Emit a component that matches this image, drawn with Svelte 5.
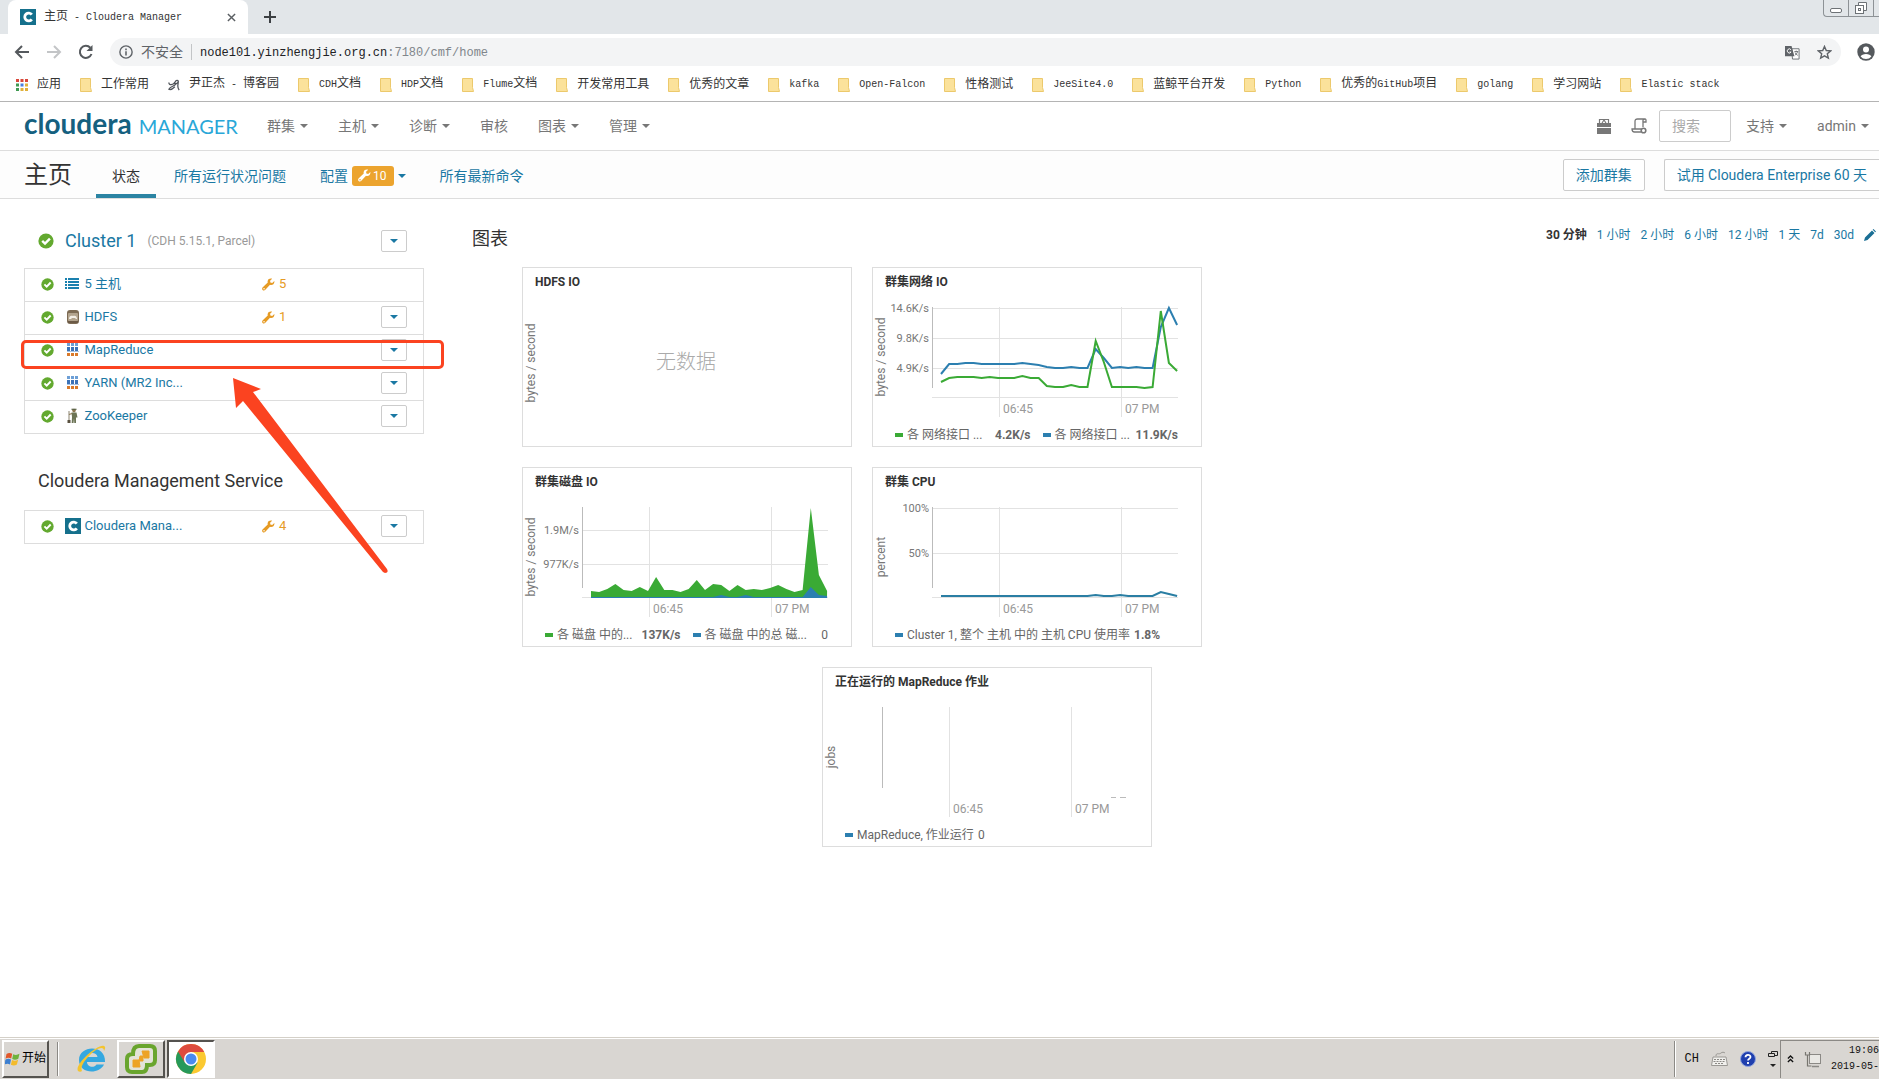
<script>
    let search = $state("");

    const bookmarks = [
        "工作常用", "尹正杰 - 博客园", "CDH文档", "HDP文档", "Flume文档", "开发常用工具",
        "优秀的文章", "kafka", "Open-Falcon", "性格测试", "JeeSite4.0", "蓝鲸平台开发",
        "Python", "优秀的GitHub项目", "golang", "学习网站", "Elastic stack"
    ];

    const menus = [
        { name: "群集", caret: true },
        { name: "主机", caret: true },
        { name: "诊断", caret: true },
        { name: "审核", caret: false },
        { name: "图表", caret: true },
        { name: "管理", caret: true }
    ];

    const ranges = ["1 小时", "2 小时", "6 小时", "12 小时", "1 天", "7d", "30d"];

    const services = [
        { name: "5 主机", icon: "hosts", issues: 5, menu: false },
        { name: "HDFS", icon: "hdfs", issues: 1, menu: true },
        { name: "MapReduce", icon: "mr", issues: 0, menu: true },
        { name: "YARN (MR2 Inc...", icon: "mr", issues: 0, menu: true },
        { name: "ZooKeeper", icon: "zoo", issues: 0, menu: true }
    ];
    const management = [{ name: "Cloudera Mana...", icon: "cm", issues: 4, menu: true }];

    const green = "#3aaa35";
    const blue = "#2c7fb0";

    // heights above the baseline, one per minute
    const charts = [
        { title: "HDFS IO", unit: "bytes / second", empty: true },
        {
            title: "群集网络 IO", unit: "bytes / second", baseline: true,
            ticks: [{ y: 41, label: "14.6K/s" }, { y: 71, label: "9.8K/s" }, { y: 101, label: "4.9K/s" }],
            lines: [
                { color: blue, data: [23, 33, 33, 34, 34, 33, 33, 33, 33, 33, 34, 33, 32, 30, 29, 29, 30, 29, 29, 48, 39, 29, 30, 29, 30, 29, 29, 70, 89, 72] },
                { color: green, data: [15, 19, 20, 20, 20, 19, 20, 19, 19, 19, 21, 19, 19, 11, 10, 10, 12, 10, 10, 56, 35, 10, 10, 10, 10, 9, 10, 86, 34, 26] }
            ],
            legend: [
                { color: green, name: "各 网络接口 ...", value: "4.2K/s" },
                { color: blue, name: "各 网络接口 ...", value: "11.9K/s" }
            ]
        },
        {
            title: "群集磁盘 IO", unit: "bytes / second", baseline: true, area: true,
            ticks: [{ y: 63, label: "1.9M/s" }, { y: 97, label: "977K/s" }],
            lines: [
                { color: green, data: [6, 5, 8, 13, 7, 6, 10, 6, 20, 7, 7, 5, 8, 17, 7, 13, 12, 6, 12, 7, 8, 7, 9, 12, 8, 5, 7, 89, 22, 6] },
                { color: blue, data: [0, 0, 0, 0, 0, 0, 0, 0, 0, 0, 0, 0, 0, 0, 0, 0, 2, 0, 0, 2, 0, 0, 0, 0, 0, 0, 0, 10, 2, 1] }
            ],
            legend: [
                { color: green, name: "各 磁盘 中的...", value: "137K/s" },
                { color: blue, name: "各 磁盘 中的总 磁...", value: "0" }
            ]
        },
        {
            title: "群集 CPU", unit: "percent", baseline: true,
            ticks: [{ y: 41, label: "100%" }, { y: 86, label: "50%" }],
            lines: [
                { color: "#2a7ea3", data: [1, 1, 1, 1, 1, 1, 1, 1, 1, 1, 1, 1, 1, 1, 1, 1, 1, 1, 1, 2, 1, 1, 2, 1, 1, 1, 1, 5, 3, 1] }
            ],
            legend: [{ color: blue, name: "Cluster 1, 整个 主机 中的 主机 CPU 使用率", value: "1.8%" }]
        },
        {
            title: "正在运行的 MapReduce 作业", unit: "jobs", offset: true, dashes: true,
            ticks: [], lines: [],
            legend: [{ color: blue, name: "MapReduce, 作业运行", value: "0" }]
        }
    ];

    function points(data) {
        return data.map((h, i) => `${(69 + i * 8.14).toFixed(1)},${130 - h}`).join(" ");
    }

    // splits a label into Chinese and Latin runs, the Latin ones are set smaller
    function runs(text) {
        return text.match(/[\u4e00-\u9fff]+|[^\u4e00-\u9fff]+/g);
    }
</script>

{#snippet mixed(text)}{#each runs(text) as run}<span class:latin={run.charCodeAt(0) < 256}>{run}</span>{/each}{/snippet}

{#snippet wrench()}
    <svg class="wrench" viewBox="0 0 14 14" width="13" height="13" aria-hidden="true">
        <path fill="currentColor" d="M13.3 3.3 11 5.3 9 4.900 8.700 3 10.900.8C9 .1 6.600 1 6.100 3.100c-.1.6-.1 1.200.1 1.700L.8 9.900c-.9.9-.9 2.200-.1 2.900.8.8 2.100.7 2.900-.2l5-5.300c2.300.9 5.200-.9 4.700-4zM2.200 12.400a.8.8 0 1 1 0-1.600.8.8 0 0 1 0 1.600z"/>
    </svg>
{/snippet}

{#snippet check(size)}
    <svg viewBox="0 0 16 16" width={size} height={size} role="img" aria-label="运行状况良好">
        <circle cx="8" cy="8" r="7.600" fill="#63a92f"/>
        <path d="M4.200 7.900 7 10.600 11.900 5.600" fill="none" stroke="#fff" stroke-width="2.400"/>
    </svg>
{/snippet}

{#snippet cloud(size)}
    <svg viewBox="0 0 16 16" width={size} height={size} aria-hidden="true">
        <rect width="16" height="16" fill="#15708c"/>
        <path d="M11.800 5.700A3.900 3.900 0 1 0 11.800 10.300" fill="none" stroke="#fff" stroke-width="2.800"/>
    </svg>
{/snippet}

{#snippet serviceIcon(kind)}
    {#if kind === "cm"}
        {@render cloud(16)}
    {:else}
        <svg viewBox="0 0 16 16" width="16" height="16" aria-hidden="true">
            {#if kind === "hosts"}
                {#each [2, 5, 8, 11] as y}
                    <rect x="0" {y} width="2" height="2" fill="#1a80ae"/>
                    <rect x="3" {y} width="11" height="2" fill="#1a80ae"/>
                {/each}
            {:else if kind === "hdfs"}
                <rect x="2" y="1" width="12" height="14" rx="3" fill="#7d6b54"/>
                <rect x="3" y="4" width="10" height="8" rx="1" fill="#b3a48e"/>
                <path d="M4 10c0-3 2-4 4-3 2-1 4 0 4 3l-1 0-1-1-3 0-1 1z" fill="#f4efe6"/>
                <path d="M3 13h10" stroke="#5b4a38" stroke-width="1"/>
            {:else if kind === "mr"}
                {#each [2, 6, 10] as x}
                    <rect {x} y="1" width="3" height="3" fill="#6d9fd6"/>
                    <rect {x} y="5" width="3" height="4" fill="#3c73b8"/>
                    <rect {x} y="11" width="3" height="3" fill="#d97a2b"/>
                {/each}
                <path d="M2 9.500h12" stroke="#a8c4e4" stroke-width="1"/>
            {:else}
                <circle cx="9" cy="2.600" r="1.800" fill="#8a7550"/>
                <path d="M6.500 1.300h5" stroke="#5b6246" stroke-width="1.200"/>
                <path d="M6.500 4.500h5l1 5h-1.500v5.500h-1.700L9 10.500 8.500 15H6.700L7 9z" fill="#6c7455"/>
                <path d="M4 3v9" stroke="#8b8470" stroke-width="1"/>
                <path d="M2.500 12h3v3h-3z" fill="#59503f"/>
                <path d="M4 6.500 7 5.500" stroke="#8a7550" stroke-width="1.200"/>
            {/if}
        </svg>
    {/if}
{/snippet}

{#snippet serviceTable(rows, label)}
    <table class="services" aria-label={label}>
        <tbody>
            {#each rows as row}
                <tr>
                    <td class="health">{@render check(13)}</td>
                    <td class="service">
                        <a href="#service">{@render serviceIcon(row.icon)}<span>{row.name}</span></a>
                    </td>
                    <td class="issues">
                        {#if row.issues}
                            <a href="#issues">{@render wrench()}<span>{row.issues}</span></a>
                        {/if}
                    </td>
                    <td class="action">
                        {#if row.menu}
                            <button class="drop" aria-label="{row.name} 操作"><i class="caret"></i></button>
                        {/if}
                    </td>
                </tr>
            {/each}
        </tbody>
    </table>
{/snippet}

<div class="screen">
    <div class="tabstrip">
        <div class="tab">
            {@render cloud(16)}
            <span class="tab_title">{@render mixed("主页 - Cloudera Manager")}</span>
            <button class="plain" aria-label="关闭标签页">
                <svg viewBox="0 0 10 10" width="9" height="9"><path d="M1 1l8 8M9 1l-8 8" stroke="#5a5e62" stroke-width="1.600"/></svg>
            </button>
        </div>
        <button class="plain newtab" aria-label="新标签页">
            <svg viewBox="0 0 12 12" width="12" height="12"><path d="M6 0v12M0 6h12" stroke="#3c4043" stroke-width="2"/></svg>
        </button>
        <div class="window_buttons">
            <button aria-label="最小化">
                <svg viewBox="0 0 24 16" width="24" height="16"><rect x="6.500" y="8.500" width="11" height="4" rx="1.500" fill="#fff" stroke="#6d7276"/></svg>
            </button>
            <button aria-label="还原">
                <svg viewBox="0 0 24 16" width="24" height="16">
                    <path d="M9.500 5V2.500h8v8H15" fill="#fff" stroke="#6d7276"/>
                    <rect x="6.500" y="5.500" width="8" height="8" fill="#fff" stroke="#6d7276"/>
                    <rect x="9.500" y="8.500" width="2" height="2" fill="none" stroke="#6d7276"/>
                </svg>
            </button>
            <button class="cut" aria-label="关闭"></button>
        </div>
    </div>

    <div class="toolbar">
        <button class="plain" aria-label="后退">
            <svg viewBox="0 0 16 16" width="16" height="16"><path d="M15 8H2M8 2 2 8l6 6" fill="none" stroke="#55595d" stroke-width="2"/></svg>
        </button>
        <button class="plain" aria-label="前进">
            <svg viewBox="0 0 16 16" width="16" height="16"><path d="M1 8h13M8 2l6 6-6 6" fill="none" stroke="#c3c5c7" stroke-width="2"/></svg>
        </button>
        <button class="plain" aria-label="重新加载">
            <svg viewBox="0 0 16 16" width="16" height="16">
                <path d="M13.500 10A6 6 0 1 1 12.300 3.800" fill="none" stroke="#55595d" stroke-width="2"/>
                <path d="M14.500 1v6h-6z" fill="#55595d"/>
            </svg>
        </button>
        <div class="omnibox">
            <svg viewBox="0 0 16 16" width="14" height="14" aria-hidden="true">
                <circle cx="8" cy="8" r="7" fill="none" stroke="#5f6368" stroke-width="1.600"/>
                <path d="M8 7v5M8 4v2" stroke="#5f6368" stroke-width="1.800"/>
            </svg>
            <span class="insecure">不安全</span>
            <span class="url">node101.yinzhengjie.org.cn<span>:7180/cmf/home</span></span>
            <button class="plain translate" aria-label="翻译此页">
                <svg viewBox="0 0 16 16" width="15" height="15">
                    <path d="M7 4h8v11H8z" fill="#fff" stroke="#6b6f73"/>
                    <path d="M0 1h7l3 11H0z" fill="#5f6368"/>
                    <path d="M6.500 5.200A2.200 2.200 0 1 0 6.500 7.500H4.800" fill="none" stroke="#fff"/>
                    <path d="M10 7h4M12 6v1M13.500 7c-.5 2-2 3-3 4M10.800 8c.5 1.500 1.500 2.500 2.800 3" fill="none" stroke="#6b6f73"/>
                </svg>
            </button>
            <button class="plain" aria-label="添加书签">
                <svg viewBox="0 0 16 16" width="15" height="15"><path d="M8 1.500l1.900 4.400 4.700.4-3.600 3.100 1.100 4.600L8 11.500 3.900 14 5 9.400 1.400 6.300l4.700-.4z" fill="none" stroke="#5f6368" stroke-width="1.500"/></svg>
            </button>
        </div>
        <button class="plain" aria-label="用户">
            <svg viewBox="0 0 18 18" width="18" height="18">
                <circle cx="9" cy="9" r="8.700" fill="#55595d"/>
                <circle cx="9" cy="6.400" r="3" fill="#fff"/>
                <path d="M3.600 13.500c1-3.500 9.800-3.500 10.800 0a7 7 0 0 1-10.800 0z" fill="#fff"/>
            </svg>
        </button>
    </div>

    <nav class="bookmarks" aria-label="书签栏">
        <a href="#apps">
            <svg viewBox="0 0 12 12" width="12" height="12" aria-hidden="true">
                {#each ["#d9483b", "#d9483b", "#d9483b", "#3f9a52", "#4a80e0", "#e0b13a", "#3f9a52", "#e0b13a", "#e0b13a"] as color, i}
                    <rect x={(i % 3) * 4.500} y={Math.floor(i / 3) * 4.500} width="3" height="3" fill={color}/>
                {/each}
            </svg>
            <span>应用</span>
        </a>
        {#each bookmarks as bookmark, i}
            <a href="#bookmark">
                {#if i === 1}
                    <svg viewBox="0 0 14 14" width="12" height="14" aria-hidden="true">
                        <path d="M1 4c0 4 5 3 7 0 1-3 4-3 4-1s-4 4-5 1M12 3c0 4-2 6 1 10M9 6C7 9 3 8 1 12c2 1 5-1 7-3" fill="none" stroke="#50545a" stroke-width="1.500"/>
                    </svg>
                {:else}
                    <svg viewBox="0 0 12 14" width="12" height="14" aria-hidden="true">
                        <path d="M.5.5h10v9l1 4H.5z" fill="#fbe29b" stroke="#ecc96c"/>
                    </svg>
                {/if}
                <span>{@render mixed(bookmark)}</span>
            </a>
        {/each}
    </nav>

    <header class="header">
        <a class="logo" href="#home"><b>cloudera</b><span>MANAGER</span></a>
        <nav class="menus">
            {#each menus as menu}
                <a href="#menu">{menu.name}{#if menu.caret}<i class="caret"></i>{/if}</a>
            {/each}
        </nav>
        <div class="tools">
            <a href="#parcels" aria-label="Parcel">
                <svg viewBox="0 0 14 16" width="14" height="16">
                    <path d="M0 5h14v4H0zM0 10h14v6H0z" fill="#777"/>
                    <path d="M2.500 5V1.500h9V5M5 5l2-3 2 3" fill="none" stroke="#777" stroke-width="1.200"/>
                </svg>
            </a>
            <a class="commands" href="#commands" aria-label="正在运行的命令">
                <svg viewBox="0 0 16 16" width="16" height="16">
                    <path d="M4 11V3.500C4 1.500 5 1 6.500 1H14c-2 0-2.300 1.500-2 3h3V2.500C15 1.500 14.700 1 14 1M12 4v5M10 11H1c0 2.500 1 3 2.500 3H10" fill="none" stroke="#777" stroke-width="1.300"/>
                    <circle cx="12.500" cy="12.500" r="2.300" fill="none" stroke="#777" stroke-width="1.600"/>
                </svg>
            </a>
            <input type="text" placeholder="搜索" aria-label="搜索" bind:value={search}>
            <a class="support" href="#support">支持<i class="caret"></i></a>
            <a class="admin" href="#admin">admin<i class="caret"></i></a>
        </div>
    </header>

    <div class="subheader">
        <h1>主页</h1>
        <nav class="pages">
            <a class="active" href="#status">状态</a>
            <a href="#health">所有运行状况问题</a>
            <a href="#config">配置<span class="badge">{@render wrench()}10</span><i class="caret"></i></a>
            <a href="#recent">所有最新命令</a>
        </nav>
        <div class="actions">
            <button>添加群集</button>
            <button class="trial">试用 Cloudera Enterprise 60 天</button>
        </div>
    </div>

    <main class="content">
        <section class="clusters">
            <div class="cluster_head">
                {@render check(16)}
                <h2><a href="#cluster">Cluster 1</a></h2>
                <small>(CDH 5.15.1, Parcel)</small>
                <button class="drop" aria-label="Cluster 1 操作"><i class="caret"></i></button>
            </div>
            {@render serviceTable(services, "Cluster 1")}
            <h2 class="management">Cloudera Management Service</h2>
            {@render serviceTable(management, "Cloudera Management Service")}

            <!-- marker around the MapReduce row -->
            <div class="marker"></div>
            <svg class="arrow" viewBox="0 0 156 196" width="156" height="196" aria-hidden="true">
                <path d="M0 0 28 11 20 14 154 191Q156 195 152 195L150 194 10 23 3 30z" fill="#fb4320"/>
            </svg>
        </section>

        <section class="charts">
            <div class="charts_head">
                <h2>图表</h2>
                <div class="ranges">
                    <b>30 分钟</b>
                    {#each ranges as range}
                        <a href="#range">{range}</a>
                    {/each}
                    <button class="plain" aria-label="编辑">
                        <svg viewBox="0 0 12 12" width="12" height="12"><path d="M0 12 1 8.500 8 1.500 10.500 4 3.500 11zM8.700.8 9.500 0 12 2.500l-.8.8z" fill="#1a6f95"/></svg>
                    </button>
                </div>
            </div>
            <div class="cards">
                {#each charts as chart}
                    <article class="card" class:offset={chart.offset}>
                        <h3>{chart.title}</h3>
                        <svg viewBox="1 30 328 126" width="328" height="126" role="img" aria-label={chart.title}>
                            <text class="unit" transform="translate(13 {chart.empty ? 96 : 90}) rotate(-90)">{chart.unit}</text>
                            {#if chart.empty}
                                <text class="nodata" x="164" y="102">无数据</text>
                            {:else}
                                {#each chart.ticks as tick}
                                    <path class="grid" d="M60 {tick.y}.5H306"/>
                                    <text class="tick" x="57" y={tick.y + 4}>{tick.label}</text>
                                {/each}
                                <path class="grid" d="M127.500 40V150M249.500 40V150"/>
                                {#if chart.baseline}
                                    <path class="grid" d="M60 130.500H306"/>
                                {/if}
                                <path class="axis" d="M60.500 40V121"/>
                                {#each chart.lines as line}
                                    {#if chart.area}
                                        <polygon points="69,131 69,130 {points(line.data)} 305,131" fill={line.color}/>
                                    {:else}
                                        <polyline points={points(line.data)} fill="none" stroke={line.color} stroke-width="2"/>
                                    {/if}
                                {/each}
                                {#if chart.dashes}
                                    <path class="axis" d="M289 130.500h5M298 130.500h6"/>
                                {/if}
                                <text class="time" x="131" y="146">06:45</text>
                                <text class="time" x="253" y="146">07 PM</text>
                            {/if}
                        </svg>
                        {#if chart.legend}
                            <div class="legend" class:pair={chart.legend.length > 1}>
                                {#each chart.legend as item}
                                    <div class="item">
                                        <i class="swatch" style="background: {item.color}"></i>
                                        <span>{item.name}</span>
                                        <b class:zero={item.value === "0"}>{item.value}</b>
                                    </div>
                                {/each}
                            </div>
                        {/if}
                    </article>
                {/each}
            </div>
        </section>
    </main>

    <footer class="taskbar">
        <button class="start">
            <svg viewBox="0 0 16 16" width="16" height="16" aria-hidden="true">
                <path d="M1.500 3c2-1.500 4-1.300 5.700-.2L6.200 7.600C4.500 6.600 2.500 6.500.5 7.700z" fill="#e2572b"/>
                <path d="M8.200 3.200c2 1.100 4 1 6.300-.4l-1.200 4.900c-2 1.200-4 1.300-6.100.3z" fill="#6fb23c"/>
                <path d="M.3 8.800c2-1.200 4-1.200 5.700-.2l-1 4.800c-1.700-1-3.500-1-5.300.1z" fill="#3d7fd0"/>
                <path d="M7 9.100c2 1 4 .9 6.100-.3l-1.200 4.800c-2 1.200-4 1.200-6 .2z" fill="#f3bb2c"/>
            </svg>
            <span>开始</span>
        </button>
        <div class="groove"></div>
        <button class="task" aria-label="Internet Explorer">
            <svg viewBox="0 0 32 32" width="32" height="32">
                <path d="M30 19H12c0 5 7 6.500 9.500 2.500H29C24 32 4 31 4 17 4 2 31 1 30 19zM12 14h10.500c-.5-5.500-10-5.500-10.500 0z" fill="#35a8e0"/>
                <path d="M3 28C-1 22 22 1 29 3c2 1 1 3 0 5 0-6-8-2-13 3C10 17 5 23 7 28c-1 1-3 1-4 0z" fill="#f4c430"/>
            </svg>
        </button>
        <button class="task raised" aria-label="VMware vSphere Client">
            <svg viewBox="0 0 32 32" width="32" height="32">
                <path d="M14 3h11q5 0 5 5v9q0 5-5 5h-3q0 7-5 7H7q-5 0-5-5v-8q0-5 6-5 0-8 6-8z" fill="#e3e3d8" stroke="#69a52e" stroke-width="4"/>
                <path d="M17 8h7v7h-5zM8 17h6l1 7H8zM15 13h3v5h-4z" fill="#eda325" stroke="#eda325" stroke-width="1"/>
            </svg>
        </button>
        <button class="task current" aria-label="Google Chrome">
            <svg viewBox="0 0 32 32" width="32" height="32">
                <circle cx="16" cy="16" r="15" fill="#fbc931"/>
                <path d="M3 8.500A15 15 0 0 0 16 31L22.500 19.800 16 16z" fill="#26995a"/>
                <path d="M16 9H29.200A15 15 0 0 0 3 8.500L9.800 19.500z" fill="#dd4b3e"/>
                <circle cx="16" cy="16" r="7" fill="#fff"/>
                <circle cx="16" cy="16" r="5.500" fill="#4a8af0"/>
            </svg>
        </button>
        <div class="language">
            <span>CH</span>
            <svg viewBox="0 0 17 17" width="17" height="17" aria-hidden="true">
                <path d="M2 7h13l1.500 8.500H.5z" fill="#f1f0ed" stroke="#9a9894"/>
                <path d="M3 9.500h11M2.500 11.500h12M4 13.500h9" stroke="#8b8985" stroke-dasharray="2 1"/>
                <path d="M5 6c0-4 3-1 5-3 1-1 3-1 4 0" fill="none" stroke="#9a9894"/>
            </svg>
            <svg viewBox="0 0 16 16" width="16" height="16" aria-hidden="true">
                <circle cx="8" cy="8" r="7.500" fill="#1f3fae" stroke="#8fa3dc"/>
                <path d="M5.500 6.300c0-3.300 5-3.200 5-.3 0 1.700-2.500 1.800-2.500 3.600M8 11v2" fill="none" stroke="#fff" stroke-width="1.800"/>
            </svg>
            <svg viewBox="0 0 10 18" width="10" height="18" aria-hidden="true">
                <path d="M3.500 3V1.500h6v4H7M.5 3.500h6v3h-6z" fill="none" stroke="#222"/>
                <path d="M2 14h6l-3 3z" fill="#222"/>
            </svg>
        </div>
        <div class="tray">
            <svg viewBox="0 0 8 10" width="7" height="10" aria-hidden="true"><path d="M1 4.500l3-3 3 3M1 8.500l3-3 3 3" fill="none" stroke="#111" stroke-width="1.500"/></svg>
            <svg viewBox="0 0 17 17" width="17" height="17" aria-hidden="true">
                <rect x="5.500" y="3.500" width="11" height="9" fill="#e9e8e4" stroke="#8b8985"/>
                <path d="M8 15.500h7" stroke="#8b8985" stroke-width="1.500"/>
                <path d="M1.500 1v3h4V1M3.500 4v11h4" fill="none" stroke="#77756f" stroke-width="1.200"/>
            </svg>
            <div class="clock">
                <span>19:06</span>
                <span>2019-05-</span>
            </div>
        </div>
    </footer>
</div>

<style>
    :global(body){
        background-color: #fff;
        font-family: Roboto, "Noto Sans CJK SC", sans-serif;
        font-size: 14px;
        line-height: 20px;
        color: #333;
    }

    .screen{
        min-height: 100vh;
        display: flex;
        flex-direction: column;
        overflow: hidden;
    }

    a{
        color: #1a78a3;
        text-decoration: none;
    }

    button, input{
        font: inherit;
        box-sizing: border-box;
    }

    svg{
        flex: none;
        display: block;
    }

    h1, h2, h3{
        margin: 0;
        font-weight: 400;
    }

    .plain{
        border: 0;
        padding: 0;
        background: none;
        display: flex;
    }

    .caret{
        display: inline-block;
        border: 4px solid transparent;
        border-top-color: currentColor;
        border-bottom: 0;
    }

    .latin{
        font-size: 10px;
    }

    /* browser chrome */
    .tabstrip{
        height: 34px;
        padding-left: 8px;
        background-color: #e2e6e9;
        display: flex;
        align-items: center;
    }

    .tab{
        width: 240px;
        height: 34px;
        padding: 0 12px;
        box-sizing: border-box;
        background-color: #fff;
        border-radius: 8px 8px 0 0;
        display: flex;
        align-items: center;
        gap: 8px;
    }

    .tab_title{
        flex: 1;
        font: 12px/16px "Liberation Mono", "Noto Sans CJK SC", monospace;
        white-space: pre;
    }

    .newtab{
        margin-left: 16px;
    }

    .window_buttons{
        margin-left: auto;
        align-self: flex-start;
        display: flex;
    }

    .window_buttons button{
        width: 25px;
        height: 17px;
        padding: 0;
        border: 1px solid #8d9296;
        border-width: 0 0 1px 1px;
        background: none;
    }

    .window_buttons button:first-child{
        border-radius: 0 0 0 4px;
    }

    .window_buttons .cut{
        width: 6px;
    }

    .toolbar{
        height: 36px;
        padding: 0 4px 0 14px;
        display: flex;
        align-items: center;
        gap: 16px;
    }

    .omnibox{
        flex: 1;
        height: 28px;
        padding: 0 9px 0 9px;
        background-color: #f3f4f5;
        border-radius: 14px;
        display: flex;
        align-items: center;
        gap: 8px;
    }

    .insecure{
        padding-right: 8px;
        border-right: 1px solid #c3c5c7;
        line-height: 16px;
        color: #5f6368;
    }

    .url{
        flex: 1;
        padding-top: 2px;
        font: 12px/16px "Liberation Mono", monospace;
        color: #202124;
    }

    .url span{
        color: #80868b;
    }

    .translate{
        margin-right: 9px;
    }

    .bookmarks{
        height: 32px;
        padding: 0 0 2px 16px;
        box-sizing: border-box;
        border-bottom: 1px solid #b4b4b4;
        display: flex;
        align-items: center;
        gap: 19px;
        font: 12px/16px "Liberation Mono", "Noto Sans CJK SC", monospace;
        white-space: pre;
    }

    .bookmarks a{
        display: flex;
        align-items: center;
        gap: 9px;
        color: #333;
    }

    /* Cloudera Manager header */
    .header{
        height: 48px;
        padding: 0 10px 0 24px;
        border-bottom: 1px solid #ddd;
        display: flex;
        align-items: center;
    }

    .logo{
        width: 243px;
        padding-bottom: 4px;
        display: flex;
        align-items: baseline;
        gap: 7px;
        font-family: Lato, sans-serif;
        color: #29a7d8;
        font-size: 20px;
    }

    .logo b{
        font-size: 28px;
        color: #15607f;
    }

    .menus{
        display: flex;
        gap: 30px;
    }

    .menus a, .support, .admin{
        color: #777;
        display: flex;
        align-items: center;
        gap: 5px;
    }

    .tools{
        margin-left: auto;
        display: flex;
        align-items: center;
    }

    .commands{
        margin: 0 12px 0 20px;
    }

    .tools input{
        width: 72px;
        height: 32px;
        padding: 0 12px;
        border: 1px solid #ccc;
        border-radius: 2px;
    }

    .tools input::placeholder{
        color: #aaa;
        opacity: 1;
    }

    .support{
        margin: 0 30px 0 15px;
    }

    .subheader{
        height: 47px;
        padding-left: 24px;
        border-bottom: 1px solid #ddd;
        background-color: #fdfdfd;
        display: flex;
        align-items: center;
    }

    .subheader h1{
        width: 72px;
        font-size: 24px;
        line-height: 32px;
    }

    .pages{
        align-self: stretch;
        display: flex;
        gap: 2px;
    }

    .pages a{
        padding: 6px 16px 0;
        border-bottom: 4px solid transparent;
        display: flex;
        align-items: center;
    }

    .pages .active{
        color: #333;
        border-color: #2b84a3;
    }

    .badge{
        height: 20px;
        margin: 0 4px 0 4px;
        padding: 0 7px 0 6px;
        background-color: #eca42e;
        border-radius: 3px;
        color: #fff;
        font-size: 12px;
        display: flex;
        align-items: center;
        gap: 2px;
    }

    .actions{
        margin-left: auto;
        display: flex;
        gap: 19px;
    }

    .actions button{
        height: 32px;
        padding: 0 12px;
        border: 1px solid #ccc;
        border-radius: 2px;
        background-color: #fff;
        color: #1a78a3;
    }

    .actions .trial{
        border-right: 0;
        border-radius: 2px 0 0 2px;
    }

    /* page content */
    .content{
        flex: 1;
        padding: 24px 0 0 24px;
        display: flex;
        align-items: flex-start;
        gap: 48px;
    }

    .clusters{
        width: 400px;
        flex: none;
        position: relative;
    }

    .cluster_head{
        height: 45px;
        padding: 0 17px 10px 14px;
        box-sizing: border-box;
        display: flex;
        align-items: center;
        gap: 11px;
    }

    .cluster_head h2, .management, .charts_head h2{
        font-size: 18px;
        line-height: 24px;
    }

    .cluster_head small{
        font-size: 12px;
        color: #999;
    }

    .cluster_head .drop{
        margin-left: auto;
    }

    .drop{
        width: 26px;
        height: 22px;
        padding: 0;
        border: 1px solid #ccc;
        border-radius: 2px;
        background-color: #fff;
        color: #1a78a3;
        display: flex;
        align-items: center;
        justify-content: center;
    }

    .services{
        width: 100%;
        border-collapse: collapse;
        border: 1px solid #ddd;
        table-layout: fixed;
        font-size: 13px;
    }

    .services td{
        height: 30px;
        padding: 0 0 2px;
        border-bottom: 1px solid #ddd;
    }

    .services a{
        display: flex;
        align-items: center;
        gap: 4px;
    }

    .services .health{
        width: 40px;
        padding-left: 16px;
        box-sizing: border-box;
    }

    .services .issues{
        width: 119px;
    }

    .services .issues a{
        color: #e69b24;
    }

    .services .action{
        width: 42px;
    }

    .management{
        padding: 35px 0 17px 14px;
    }

    .marker{
        position: absolute;
        left: -3px;
        top: 117px;
        width: 423px;
        height: 29px;
        box-sizing: border-box;
        border: 3px solid #fb4320;
        border-radius: 5px;
    }

    .arrow{
        position: absolute;
        left: 209px;
        top: 155px;
    }

    .charts{
        flex: 1;
    }

    .charts_head{
        height: 44px;
        padding-right: 3px;
        display: flex;
        align-items: flex-start;
        justify-content: space-between;
        line-height: 24px;
    }

    .charts_head h2{
        padding-top: 4px;
    }

    .ranges{
        display: flex;
        align-items: center;
        gap: 10px;
        font-size: 12px;
    }

    .cards{
        width: 680px;
        margin-left: 50px;
        display: flex;
        flex-wrap: wrap;
        gap: 20px;
    }

    .card{
        width: 330px;
        height: 180px;
        box-sizing: border-box;
        border: 1px solid #ddd;
    }

    .offset{
        margin-left: 300px;
    }

    .card h3{
        height: 29px;
        padding-left: 12px;
        font-size: 12px;
        line-height: 28px;
        font-weight: 700;
    }

    .card text{
        font-size: 12px;
        fill: #777;
    }

    .card .unit{
        text-anchor: middle;
    }

    .card .tick{
        font-size: 11px;
        text-anchor: end;
    }

    .card .time{
        fill: #999;
    }

    .card .nodata{
        font-size: 20px;
        font-weight: 300;
        fill: #aaa;
        text-anchor: middle;
    }

    .grid{
        stroke: #e2e2e2;
    }

    .axis{
        stroke: #bbb;
    }

    .legend{
        padding: 0 23px 0 22px;
        font-size: 12px;
        line-height: 24px;
        color: #666;
        white-space: nowrap;
    }

    .pair{
        display: grid;
        grid-template-columns: 1fr 1fr;
        gap: 12px;
    }

    .item{
        display: flex;
        align-items: center;
        gap: 4px;
    }

    .pair b{
        margin-left: auto;
    }

    .zero{
        font-weight: 400;
    }

    .swatch{
        width: 8px;
        height: 4px;
    }

    /* Windows taskbar */
    .taskbar{
        height: 42px;
        padding-left: 2px;
        box-sizing: border-box;
        border-top: 1px solid #d4d0c8;
        box-shadow: inset 0 1px #fff;
        background-color: #d9d6d2;
        display: flex;
        align-items: center;
        font: 12px/16px "Liberation Mono", "Noto Sans CJK SC", monospace;
        color: #111;
    }

    .start, .task{
        height: 38px;
        padding: 0;
        border: 2px solid transparent;
        background: none;
        display: flex;
        align-items: center;
        justify-content: center;
    }

    .start, .raised{
        border-color: #fff #55534f #55534f #fff;
    }

    .start{
        width: 47px;
        gap: 1px;
    }

    .task{
        width: 48px;
    }

    .task + .task{
        margin-left: 2px;
    }

    .current{
        border-color: #55534f #fff #fff #55534f;
        background-color: #fff;
    }

    .groove{
        width: 2px;
        height: 34px;
        margin: 0 8px;
        box-sizing: border-box;
        border-left: 1px solid #8b8985;
        border-right: 1px solid #fff;
    }

    .language{
        height: 36px;
        margin-left: auto;
        padding: 0 2px 0 10px;
        border-left: 1px solid #8b8985;
        box-shadow: inset 1px 0 #fff;
        display: flex;
        align-items: center;
        gap: 12px;
    }

    .tray{
        height: 38px;
        padding: 0 0 0 6px;
        box-sizing: border-box;
        border: 1px solid #8b8985;
        border-width: 1px 0 0 1px;
        display: flex;
        align-items: center;
        gap: 10px;
    }

    .clock{
        display: flex;
        flex-direction: column;
        align-items: flex-end;
        font-size: 10px;
    }
</style>
